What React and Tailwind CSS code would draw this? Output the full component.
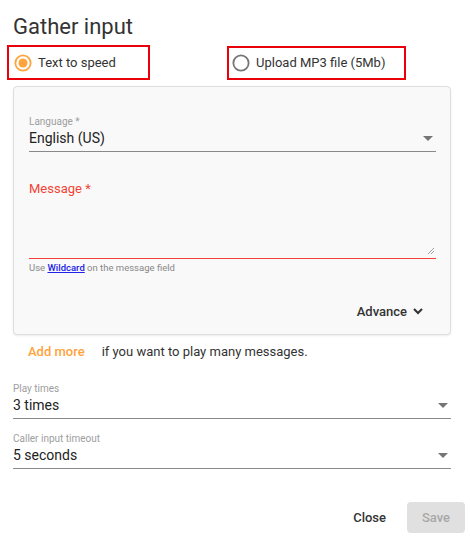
import React from "react";

const font = { fontFamily: "Roboto, 'Liberation Sans', sans-serif" };

const Caret = () => (
  <svg width="10" height="5" viewBox="0 0 10 5" className="fill-[#757575]">
    <path d="M0 0 L10 0 L5 5 Z" />
  </svg>
);

const SelectField = ({ label, value, className = "" }) => (
  <div className={className}>
    <div className="text-[10px] leading-[12px] text-[#9e9e9e]">{label}</div>
    <div className="flex items-center justify-between border-b border-[#8a8a8a] pt-[1px] pb-[4px]">
      <span className="text-[14px] leading-[18px] text-[#222]">{value}</span>
      <span className="mr-[3px]">
        <Caret />
      </span>
    </div>
  </div>
);

export default function App() {
  return (
    <div style={font} className="w-[470px] h-[542px] bg-white relative text-[#333]">
      <div className="pl-[13px] pt-[14px] text-[22px] leading-[26px] text-[#333]">Gather input</div>

      <div className="flex items-center mt-[5px]">
        <div className="ml-[7px] w-[143px] h-[35px] border-2 border-[#e8000b] flex items-center pl-[5px] gap-[6px]">
          <svg width="18" height="18" viewBox="0 0 20 20">
            <circle cx="10" cy="10" r="8.5" fill="none" stroke="#ffa43d" strokeWidth="2" />
            <circle cx="10" cy="10" r="5" fill="#ffa43d" />
          </svg>
          <span className="text-[13px] text-[#333]">Text to speed</span>
        </div>
        <div className="ml-[77px] w-[179px] h-[34px] border-2 border-[#e8000b] flex items-center pl-[3px] gap-[6px]">
          <svg width="18" height="18" viewBox="0 0 20 20">
            <circle cx="10" cy="10" r="8.5" fill="none" stroke="#757575" strokeWidth="2" />
          </svg>
          <span className="text-[13px] text-[#333]">Upload MP3 file (5Mb)</span>
        </div>
      </div>

      <div className="ml-[13px] mt-[6px] w-[438px] h-[249px] bg-[#f9f9f9] border border-[#dedede] rounded-[4px] shadow-[0_1px_2px_rgba(0,0,0,0.08)] px-[15px] pt-[29px] flex flex-col">
        <SelectField label="Language *" value="English (US)" className="w-[407px]" />

        <div className="mt-[29px] w-[407px]">
          <div className="text-[13px] leading-[16px] text-[#f44336]">Message *</div>
          <div className="relative h-[62px] border-b border-[#f44336]">
            <svg width="8" height="8" viewBox="0 0 8 8" className="absolute right-[1px] bottom-[3px] stroke-[#888]">
              <path d="M1 7 L7 1 M4 7 L7 4" strokeWidth="0.8" fill="none" />
            </svg>
          </div>
          <div className="mt-[3px] text-[9.5px] leading-[12px] text-[#888]">
            Use <span className="text-[#2020e8] underline font-medium">Wildcard</span> on the message field
          </div>
        </div>

        <div className="mt-auto mb-[13px] flex justify-end pr-[11px]">
          <div className="flex items-center gap-[5px] text-[13px] font-medium text-[#333]">
            Advance
            <svg width="12" height="12" viewBox="0 0 12 12" fill="none" stroke="#333" strokeWidth="2">
              <path d="M2 4 L6 8 L10 4" />
            </svg>
          </div>
        </div>
      </div>

      <div className="flex items-center mt-[8px] pl-[28px] text-[13px] leading-[18px]">
        <span className="text-[#ffa43d] font-medium">Add more</span>
        <span className="ml-[17px] text-[#333]">if you want to play many messages.</span>
      </div>

      <SelectField label="Play times" value="3 times" className="ml-[13px] mt-[22px] w-[438px]" />
      <SelectField label="Caller input timeout" value="5 seconds" className="ml-[13px] mt-[14px] w-[438px]" />

      <div className="absolute right-[5px] top-[502px] flex items-center gap-[7px]">
        <div className="px-[14px] text-[13px] font-medium text-[#333]">Close</div>
        <div className="w-[58px] h-[31px] rounded-[4px] bg-[#e0e0e0] flex items-center justify-center text-[13px] font-medium text-[#a8a8a8]">
          Save
        </div>
      </div>
    </div>
  );
}
